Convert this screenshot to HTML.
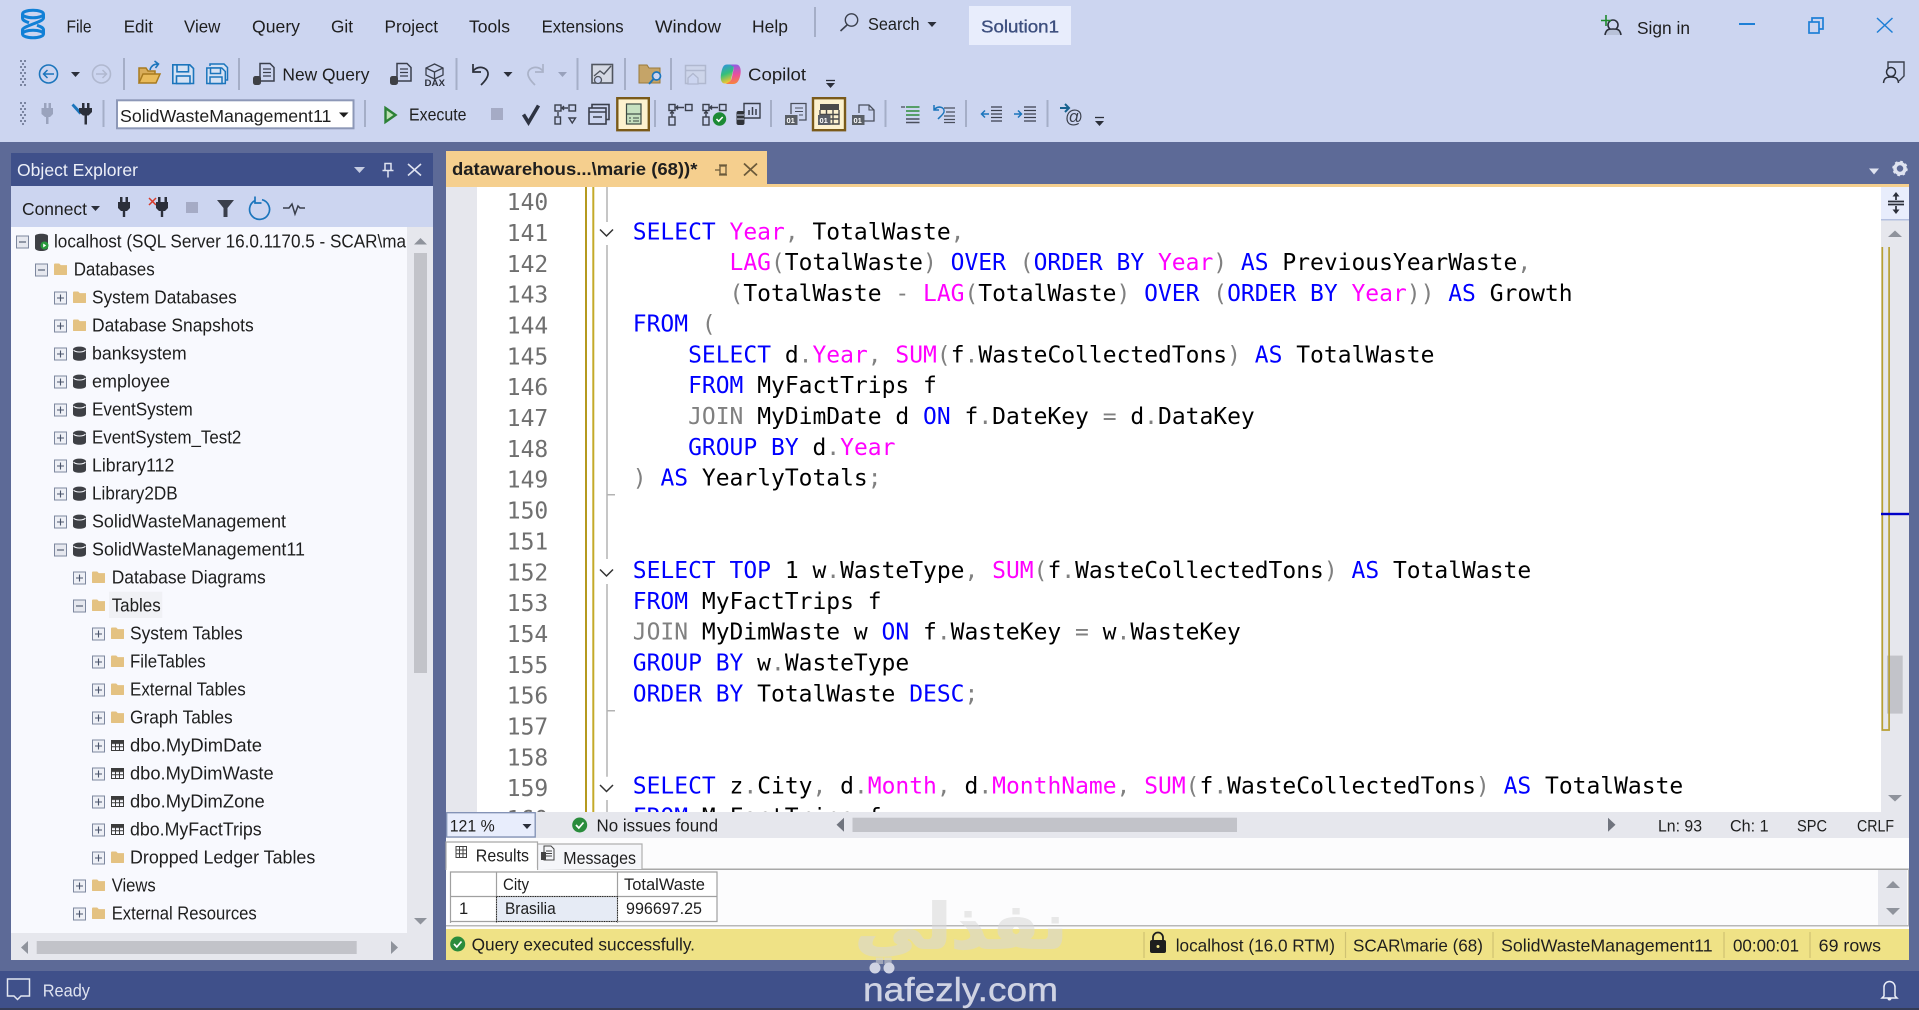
<!DOCTYPE html>
<html lang="en">
<head>
<meta charset="utf-8">
<title>SSMS</title>
<style>
html,body{margin:0;padding:0;width:1919px;height:1010px;overflow:hidden;background:#5d6a97}
svg{display:block}
text{font-family:"Liberation Sans",sans-serif;fill:#1e1e1e;font-size:17.5px}
.t{font-size:18px}
.c{font-family:"DejaVu Sans Mono",monospace;font-size:22.96px;fill:#000;white-space:pre}
.n{font-family:"DejaVu Sans Mono",monospace;font-size:22.96px;fill:#6f6f6f}
.k{fill:#0000ff}.f{fill:#ff00ff}.g{fill:#808080}
.s{font-size:15.5px}
.ic{fill:none;stroke:#3a3f4c;stroke-width:1.5}
.o{font-family:"Liberation Sans",sans-serif;font-size:7.5px;font-weight:bold;fill:#fff}
</style>
</head>
<body>
<svg xmlns="http://www.w3.org/2000/svg" width="1919" height="1010" viewBox="0 0 1919 1010">
<defs>
<clipPath id="treeclip"><rect x="11" y="227" width="395.700" height="706"/></clipPath>
<g id="fo"><path d="M0 1.5a1 1 0 0 1 1-1h4.2l1.6 1.6H13v9.4a.5.5 0 0 1-.5.5H.5a.5.5 0 0 1-.5-.5z" fill="#e4c282"/></g>
<g id="db"><path d="M0 3C0-.8 13-.8 13 3V11.5C13 15.200 0 15.200 0 11.5z" fill="#3e4045"/><path d="M.6 3.600C2.500 6.200 10.500 6.200 12.400 3.600" fill="none" stroke="#f8f9fe" stroke-width="1"/></g>
<g id="tb"><rect x=".5" y=".5" width="12" height="10" fill="#f8f9fe" stroke="#3c3c3c"/><path d="M.5 3.600h12M.5 6.800h12M4.500 .5v10M8.500 .5v10" stroke="#3c3c3c" fill="none"/><rect x=".5" y=".5" width="12" height="2.500" fill="#3c3c3c"/></g>
<g id="pl"><rect x=".5" y=".5" width="12" height="12" fill="#eef0f6" stroke="#7d879e"/><path d="M3 6.500h7M6.500 3v7" stroke="#4a556c" stroke-width="1.100"/></g>
<g id="mi"><rect x=".5" y=".5" width="12" height="12" fill="#e6e8ef" stroke="#7d879e"/><path d="M3 6.500h7" stroke="#4a556c" stroke-width="1.100"/></g>
<g id="cv"><path d="M0 0l6.500 6.500L13 0" fill="none" stroke="#333" stroke-width="1.500"/></g>
<linearGradient id="cpa" x1="0" y1="0" x2="0.3" y2="1"><stop offset="0" stop-color="#2f8fe8"/><stop offset=".55" stop-color="#35c07a"/><stop offset="1" stop-color="#f2c530"/></linearGradient>
<linearGradient id="cpb" x1="0.4" y1="0" x2="0.5" y2="1"><stop offset="0" stop-color="#8a5ce6"/><stop offset=".55" stop-color="#ec4f9c"/><stop offset="1" stop-color="#f7863a"/></linearGradient>
</defs>

<!-- chrome -->
<rect width="1919" height="142" fill="#ccd5f0"/>
<rect y="142" width="1919" height="829" fill="#5d6a97"/>
<rect y="971" width="1919" height="37" fill="#3f508a"/>
<rect y="1008" width="1919" height="2" fill="#343c57"/>

<!-- logo -->
<g fill="none" stroke="#1180d6" stroke-width="3">
<ellipse cx="33" cy="14" rx="10.500" ry="3.800"/>
<ellipse cx="33" cy="34" rx="10.500" ry="3.800"/>
<path d="M22.500 14v4c0 2.500 3 3.500 6.500 4.700M43.500 14v4c0 4-21 8-21 12v4M43.500 34v-4c0-2.500-3-3.500-6.500-4.700"/>
</g>

<!-- menu -->
<text x="66.500" y="32.700" textLength="25" lengthAdjust="spacingAndGlyphs">File</text>
<text x="123.700" y="32.700" textLength="29.300" lengthAdjust="spacingAndGlyphs">Edit</text>
<text x="184" y="32.700" textLength="36.400" lengthAdjust="spacingAndGlyphs">View</text>
<text x="252" y="32.700" textLength="48" lengthAdjust="spacingAndGlyphs">Query</text>
<text x="331" y="32.700" textLength="22" lengthAdjust="spacingAndGlyphs">Git</text>
<text x="384.500" y="32.700" textLength="53.500" lengthAdjust="spacingAndGlyphs">Project</text>
<text x="469" y="32.700" textLength="41" lengthAdjust="spacingAndGlyphs">Tools</text>
<text x="541.600" y="32.700" textLength="82" lengthAdjust="spacingAndGlyphs">Extensions</text>
<text x="655" y="32.700" textLength="66" lengthAdjust="spacingAndGlyphs">Window</text>
<text x="752" y="32.700" textLength="36" lengthAdjust="spacingAndGlyphs">Help</text>
<rect x="814" y="7" width="2" height="30" fill="#a5aec7"/>
<circle cx="851.500" cy="20" r="6.200" fill="none" stroke="#3a3f4c" stroke-width="1.400"/><path d="M847 25l-6.500 6" stroke="#3a3f4c" stroke-width="1.600"/>
<text x="868" y="30" textLength="51.600" lengthAdjust="spacingAndGlyphs">Search</text>
<path d="M927.500 22h9l-4.500 5z" fill="#2b2f3a"/>
<rect x="969" y="6" width="102" height="39" fill="#e8edfc"/>
<text x="981" y="32.700" textLength="78" lengthAdjust="spacingAndGlyphs" style="fill:#3d4f7e;stroke:#3d4f7e;stroke-width:.35;font-size:17.500px">Solution1</text>

<!-- sign in / window -->
<circle cx="1613" cy="25" r="5" fill="none" stroke="#2b2f3a" stroke-width="1.600"/>
<path d="M1605 35c1-6 4-6 8-6s7 0 8 6" fill="#b8c1d8" stroke="#2b2f3a" stroke-width="1.600"/>
<path d="M1606 15v11M1601 20.500h10" stroke="#1e8a2c" stroke-width="1.600"/>
<text x="1637" y="34" textLength="53" lengthAdjust="spacingAndGlyphs">Sign in</text>
<path d="M1739 24h16" stroke="#1e7fd6" stroke-width="2"/>
<g fill="none" stroke="#1e7fd6" stroke-width="1.700"><rect x="1809" y="22" width="10" height="11"/><path d="M1812 22v-4h11v11h-4"/></g>
<path d="M1877 18l15.500 14.500M1892.500 18l-15.500 14.500" stroke="#1e7fd6" stroke-width="1.500"/>
<path d="M1888 68v-6h16v14l-5 5" fill="none" stroke="#3a3f4c" stroke-width="1.400"/><circle cx="1891" cy="72" r="4.500" fill="#ccd5f0" stroke="#2b2f3a" stroke-width="1.500"/><path d="M1883.500 83c.5-5 3-6 7.500-6s7 1 7.500 6" fill="#ccd5f0" stroke="#2b2f3a" stroke-width="1.500"/>

<!-- toolbar 1 -->
<g fill="#7a84a0"><rect x="20" y="60" width="2" height="2"/><rect x="24" y="60" width="2" height="2"/><rect x="22" y="63" width="2" height="2"/><rect x="20" y="66" width="2" height="2"/><rect x="24" y="66" width="2" height="2"/><rect x="22" y="69" width="2" height="2"/><rect x="20" y="72" width="2" height="2"/><rect x="24" y="72" width="2" height="2"/><rect x="22" y="75" width="2" height="2"/><rect x="20" y="78" width="2" height="2"/><rect x="24" y="78" width="2" height="2"/><rect x="22" y="81" width="2" height="2"/><rect x="20" y="84" width="2" height="2"/><rect x="24" y="84" width="2" height="2"/>
<rect x="20" y="102" width="2" height="2"/><rect x="24" y="102" width="2" height="2"/><rect x="22" y="105" width="2" height="2"/><rect x="20" y="108" width="2" height="2"/><rect x="24" y="108" width="2" height="2"/><rect x="22" y="111" width="2" height="2"/><rect x="20" y="114" width="2" height="2"/><rect x="24" y="114" width="2" height="2"/><rect x="22" y="117" width="2" height="2"/><rect x="20" y="120" width="2" height="2"/><rect x="24" y="120" width="2" height="2"/><rect x="22" y="123" width="2" height="2"/></g>
<circle cx="48.500" cy="74" r="9" fill="none" stroke="#1b75bc" stroke-width="1.600"/><path d="M54 74H43.500M47.500 70l-4 4 4 4" fill="none" stroke="#1b75bc" stroke-width="1.500"/>
<path d="M71 72h9l-4.500 5z" fill="#2b2f3a"/>
<circle cx="101.500" cy="74" r="9" fill="none" stroke="#b0b8cf" stroke-width="1.600"/><path d="M96 74h10.500M102.500 70l4 4-4 4" fill="none" stroke="#b0b8cf" stroke-width="1.500"/>
<rect x="123" y="58" width="2" height="32" fill="#a5aec7"/>
<path d="M139 83V68h7l2 3h7v3" fill="#d9ad5a" stroke="#a87b1f" stroke-width="1.500"/><path d="M139 83l4-9h17l-4 9z" fill="#e9bb5a" stroke="#a87b1f" stroke-width="1.500"/><path d="M150 70c1-4 4-6 8-6M154.500 61l4 3-3 4" fill="none" stroke="#1b75bc" stroke-width="1.600"/>
<g fill="#d5e2f4" stroke="#1b75bc" stroke-width="1.600"><path d="M172.800 64.800h17l3.700 3.700v15h-20.700z"/><rect x="177" y="64.800" width="11.500" height="7"/><rect x="176.500" y="76" width="13.500" height="7.500"/></g>
<g fill="#d5e2f4" stroke="#1b75bc" stroke-width="1.500"><path d="M210 66v-2h14l3.500 3.500V80h-2"/><path d="M206.800 68h15l3.500 3.500v12h-18.500z"/><rect x="210.500" y="68" width="10" height="5.500"/><rect x="210" y="77" width="12" height="6.500"/></g>
<rect x="238" y="58" width="2" height="32" fill="#a5aec7"/>
<g><path d="M260 80V63.500h10l4 4V81h-14z" fill="#ccd5f0" stroke="#3a3f4c" stroke-width="1.500"/><path d="M263 69h8M263 72.500h8M263 76h8" stroke="#3a3f4c" stroke-width="1.200"/><rect x="253" y="76" width="8" height="9" rx="2.500" fill="#3e4045"/></g>
<text x="282.400" y="80.700" textLength="87" lengthAdjust="spacingAndGlyphs">New Query</text>
<g transform="translate(137,0)"><path d="M260 80V63.500h10l4 4V81h-14z" fill="#ccd5f0" stroke="#3a3f4c" stroke-width="1.500"/><path d="M263 69h8M263 72.500h8M263 76h8" stroke="#3a3f4c" stroke-width="1.200"/><rect x="253" y="76" width="8" height="9" rx="2.500" fill="#3e4045"/></g>
<path d="M434.500 64l8.500 4v7l-8.500 4-8.500-4v-7zM426 68l8.500 4 8.500-4M434.500 72v7" fill="none" stroke="#3a3f4c" stroke-width="1.300"/>
<text x="424.500" y="86" textLength="20.500" lengthAdjust="spacingAndGlyphs" style="font-size:9px;font-weight:bold;fill:#2b2f3a">DAX</text>
<rect x="455.500" y="58" width="2" height="32" fill="#a5aec7"/>
<path d="M473 64v8h8M473 71c5-6 14-4 15 2 .5 4-3 8-7 12" fill="none" stroke="#2b2f3a" stroke-width="1.700"/>
<path d="M503.500 72h9l-4.500 5z" fill="#2b2f3a"/>
<path d="M543 64v8h-8M543 71c-5-6-14-4-15 2-.5 4 3 8 7 12" fill="none" stroke="#aab2c8" stroke-width="1.700"/>
<path d="M558 72h9l-4.500 5z" fill="#98a1bb"/>
<rect x="576.500" y="58" width="2" height="32" fill="#a5aec7"/>
<rect x="592" y="64.500" width="20.500" height="18.500" fill="#d5d9e4" stroke="#50555f" stroke-width="1.600"/><path d="M594 76l6-5 4 3 7-8" fill="none" stroke="#50555f" stroke-width="1.400"/><circle cx="598" cy="80" r="3.500" fill="#ccd5f0" stroke="#50555f" stroke-width="1.300"/>
<rect x="624" y="58" width="2" height="32" fill="#a5aec7"/>
<path d="M639 65h8l2 3h11v15h-21z" fill="#c5a468" stroke="#9a7a3a"/>
<circle cx="656.500" cy="76" r="4" fill="#ccd5f0" stroke="#1b75bc" stroke-width="1.700"/><path d="M653.500 79l-4.500 5" stroke="#1b75bc" stroke-width="2"/>
<rect x="670" y="58" width="2" height="32" fill="#a5aec7"/>
<rect x="685.500" y="65.500" width="20" height="18" fill="#cdd5ea" stroke="#b0b8cf" stroke-width="1.500"/><path d="M686 70.500h19" stroke="#b0b8cf" stroke-width="1.500"/><path d="M688 78l5-4.500 5 4.500v6h-10z" fill="#ccd5f0" stroke="#b0b8cf" stroke-width="1.300"/>
<path d="M727 64.500c-3.500 0-4.500 3-5.500 7-1.200 5-1.500 12 3.500 12h5l4.500-19z" fill="url(#cpa)"/>
<path d="M730 64.500h6c5 0 5.500 7 4 12-1.200 4.500-3 7.500-7 7.500h-7l3-2c2-1 2.500-3 3-5l2-10z" fill="url(#cpb)"/>
<text x="748" y="80.700" textLength="58" lengthAdjust="spacingAndGlyphs">Copilot</text>
<path d="M826 80.500h9" stroke="#2b2f3a" stroke-width="1.300"/><path d="M826 83h9l-4.500 5z" fill="#2b2f3a"/>

<!-- toolbar 2 -->
<path d="M44 103h2.500v5H44zM48.500 103H51v5h-2.500zM41.500 108h11.500v6l-3 3h-1.500v7h-2.500v-7H45l-3.500-3z" fill="#9aa3bd"/>
<path d="M71.500 105.500l2-2 8.500 9-2.500 2z" fill="#1b75bc"/>
<path d="M82 103h2.500v5H82zM87 103h2.500v5H87zM79 108h13v4l-3.500 3.500H87v9h-2.500v-9H83L79 112z" fill="#2b2f3a"/>
<rect x="102.500" y="100" width="2" height="27" fill="#a5aec7"/>
<rect x="117" y="100.300" width="236.500" height="28" fill="#fff" stroke="#8d98b7" stroke-width="2"/>
<text x="120" y="122" textLength="211.400" lengthAdjust="spacingAndGlyphs">SolidWasteManagement11</text>
<path d="M339 112.500h9.500l-4.750 5z" fill="#1e1e1e"/>
<rect x="364" y="100" width="2" height="27" fill="#a5aec7"/>
<path d="M385.500 108l10 7-10 7z" fill="#bde0b4" stroke="#2c8136" stroke-width="2.400"/>
<text x="409" y="120.700" textLength="57.500" lengthAdjust="spacingAndGlyphs">Execute</text>
<rect x="491" y="108" width="12" height="12" fill="#a5abc5"/>
<path d="M523.500 114.500l5 8 10-17" fill="none" stroke="#2d3342" stroke-width="3.600"/>
<g fill="none" stroke="#3a3f4c" stroke-width="1.400"><rect x="555" y="105" width="6" height="6"/><rect x="569" y="105" width="6.500" height="6"/><path d="M562 108h6M564 106l-2 2 2 2M558 112v4"/><rect x="555" y="117" width="5.500" height="7"/><path d="M569 118h6.500l-3.250 5z"/></g>
<g fill="none" stroke="#3a3f4c" stroke-width="1.600"><rect x="592" y="104.500" width="17" height="15"/><rect x="589" y="108" width="17" height="16" fill="#ccd5f0"/><path d="M589 112h17M593 117h9"/></g>
<rect x="617.300" y="98.200" width="31.500" height="32" fill="#fdf2cf" stroke="#7a5a1a" stroke-width="2.400"/>
<rect x="626.500" y="104" width="14.500" height="20" fill="#c6e0c0" stroke="#3c4a44" stroke-width="1.200"/><path d="M626.500 114h14.500" stroke="#3c4a44" stroke-width="1.200"/><path d="M629 118h2M633 118h6M629 121h2M633 121h6" stroke="#3c4a44" stroke-width="1.100"/>
<rect x="654" y="100" width="2" height="27" fill="#a5aec7"/>
<g fill="none" stroke="#3a3f4c" stroke-width="1.400"><rect x="669" y="104.500" width="6" height="6"/><rect x="685.500" y="104.500" width="6.500" height="6"/><path d="M676 107.500h8M678 105.500l-2 2 2 2M672 111.500v5M670 113.500l2-2 2 2"/><rect x="669" y="117" width="6" height="8"/></g>
<g fill="none" stroke="#3a3f4c" stroke-width="1.400"><rect x="703" y="104.500" width="6" height="6"/><rect x="719.500" y="104.500" width="6.500" height="6"/><path d="M710 107.500h8M712 105.500l-2 2 2 2M706 111.500v5M704 113.500l2-2 2 2"/><rect x="703" y="117" width="6" height="8"/></g>
<circle cx="719.500" cy="119" r="6.700" fill="#1c8a35"/><path d="M716.500 119l2.200 2.300 4-4.300" fill="none" stroke="#fff" stroke-width="1.500"/>
<path d="M744 113v-9.500h16V118h-16" fill="none" stroke="#3a3f4c" stroke-width="1.400"/><path d="M749 115v-5M752.500 115v-8M756 115v-6" stroke="#3a3f4c" stroke-width="1.500"/><rect x="736.500" y="111" width="8" height="14" rx="2" fill="#2f3238"/><path d="M737 115h7M737 119h7" stroke="#ccd5f0"/>
<rect x="770" y="100" width="2" height="27" fill="#a5aec7"/>
<path d="M791 114v-10.500h15V120h-7" fill="none" stroke="#4a4f5c" stroke-width="1.300"/><path d="M795 108h8M795 111.500h8M799 115h4" stroke="#4a4f5c" stroke-width="1.100"/><rect x="785" y="115" width="12.500" height="10" fill="#5a5f66"/><text x="786.500" y="123" class="o">01</text>
<rect x="813" y="98.200" width="32" height="32" fill="#fdf2cf" stroke="#7a5a1a" stroke-width="2.400"/>
<path d="M820 104h19v6h-19z" fill="#4a4a4a"/><path d="M820 110v9M826.500 110v4M833 110v14M839 110v14H830M820 114.500h19M830 119h9" fill="none" stroke="#4a4a4a" stroke-width="1.400"/><rect x="818" y="115" width="12.500" height="10" fill="#5a5f66"/><text x="819.500" y="123" class="o">01</text>
<path d="M859 113v-8h10l5 5v11h-10" fill="none" stroke="#4a4f5c" stroke-width="1.300"/><path d="M869 105v5h5" fill="none" stroke="#4a4f5c" stroke-width="1.100"/><rect x="852" y="115" width="12.500" height="10" fill="#5a5f66"/><text x="853.500" y="123" class="o">01</text>
<rect x="884.500" y="100" width="2" height="27" fill="#a5aec7"/>
<path d="M901 107h4" stroke="#4a4f5c" stroke-width="1.300"/><path d="M906 107h13.500M906 111h13.500M906 115h13.500" stroke="#2f8b3a" stroke-width="1.400"/><path d="M906 119h13.500M906 122.500h13.500" stroke="#4a4f5c" stroke-width="1.400"/>
<path d="M934 105v5h5M934 110c4-5 11-3 10 2-.5 2-3 4-6 7" fill="none" stroke="#1b75bc" stroke-width="1.500"/><path d="M944 108h11M946 112h9M944 116h11M944 119.500h11M944 122.500h11" stroke="#4a4f5c" stroke-width="1.300"/>
<rect x="965" y="100" width="2" height="27" fill="#a5aec7"/>
<path d="M989 114h-7M985 110.500l-3.500 3.500 3.500 3.500" fill="none" stroke="#1b75bc" stroke-width="1.500"/><path d="M991 107h11M991 110.500h11M991 114h11M991 117.500h11M991 121h11" stroke="#3a3f4c" stroke-width="1.300"/>
<path d="M1014 114h7M1018 110.500l3.500 3.500-3.500 3.500" fill="none" stroke="#1b75bc" stroke-width="1.500"/><path d="M1024 107h12M1024 110.500h12M1024 114h12M1024 117.500h12M1024 121h12" stroke="#3a3f4c" stroke-width="1.300"/>
<rect x="1046.500" y="100" width="2" height="27" fill="#a5aec7"/>
<path d="M1060 108h9M1065 104l4 4-4 4" fill="none" stroke="#15618f" stroke-width="2"/>
<text x="1065" y="123" textLength="18" lengthAdjust="spacingAndGlyphs" style="font-size:18px;fill:#3a3f4c">@</text>
<path d="M1095 117.500h9" stroke="#2b2f3a" stroke-width="1.300"/><path d="M1095 121h9l-4.500 5z" fill="#2b2f3a"/>

<!-- Object Explorer -->
<rect x="11" y="153" width="422" height="33" fill="#3f508a"/>
<text x="17" y="176" textLength="121" lengthAdjust="spacingAndGlyphs" style="fill:#eceff8">Object Explorer</text>
<path d="M354 167h11l-5.500 6z" fill="#c5cce2"/>
<path d="M385 163.500h6v7h-6zM382.500 170.500h11M388 170.500v7" fill="#3f508a" stroke="#dfe3f0" stroke-width="1.500"/>
<path d="M408 164l13 11.500M421 164l-13 11.500" stroke="#dfe3f0" stroke-width="1.600"/>
<rect x="11" y="186" width="422" height="41" fill="#ccd5f0"/>
<text x="22" y="215" textLength="65" lengthAdjust="spacingAndGlyphs">Connect</text>
<path d="M91 206h9l-4.500 5z" fill="#2b2f3a"/>
<path d="M120 197h2.500v5H120zM125.500 197h2.500v5h-2.500zM118 202h12v6l-3 3h-1.800v6h-2.400v-6H121l-3-3z" fill="#2b2f3a"/>
<path d="M149 198l7 7M156 198l-7 7" stroke="#d83b2b" stroke-width="1.500"/>
<path d="M158 197h2.500v5H158zM164.500 197h2.500v5h-2.500zM156 202h12v6l-3 3h-1.800v6h-2.400v-6H159l-3-3z" fill="#2b2f3a"/>
<rect x="186" y="202" width="12" height="11" fill="#a5abc5"/>
<path d="M217 200h17l-6.500 8v5h-4v-5zM223.500 213h4v4h-4z" fill="#3a3f4c"/>
<path d="M255 200.500a10 10 0 1 0 7-.8M255 196.500v6.500h6.500" fill="none" stroke="#1b75bc" stroke-width="1.700"/>
<path d="M283 208h6l3-4 3 10 3-8 2 2h5" fill="none" stroke="#3a3f4c" stroke-width="1.500"/>

<rect x="11" y="227" width="396" height="706" fill="#f8f9fe"/>
<rect x="407" y="227" width="26" height="733" fill="#e6e7ed"/>
<rect x="11" y="933" width="422" height="27" fill="#e6e7ed"/>
<rect x="109" y="591.700" width="53.300" height="26.300" fill="#f0f1f5"/>

<!-- tree expanders + icons -->
<use href="#mi" x="16" y="235.500"/>
<path d="M35 236C35 233 48 233 48 236V248C48 252 35 252 35 248z" fill="#3e4045"/><circle cx="44.500" cy="245.500" r="4" fill="#2a9a3c"/><path d="M43.200 243.500l3 2-3 2z" fill="#fff"/>
<use href="#mi" x="35" y="263.500"/><use href="#fo" x="54" y="263"/>
<use href="#pl" x="54" y="291.500"/><use href="#fo" x="73" y="291"/>
<use href="#pl" x="54" y="319.500"/><use href="#fo" x="73" y="319"/>
<use href="#pl" x="54" y="347.500"/><use href="#db" x="73" y="346.500"/>
<use href="#pl" x="54" y="375.500"/><use href="#db" x="73" y="374.500"/>
<use href="#pl" x="54" y="403.500"/><use href="#db" x="73" y="402.500"/>
<use href="#pl" x="54" y="431.500"/><use href="#db" x="73" y="430.500"/>
<use href="#pl" x="54" y="459.500"/><use href="#db" x="73" y="458.500"/>
<use href="#pl" x="54" y="487.500"/><use href="#db" x="73" y="486.500"/>
<use href="#pl" x="54" y="515.500"/><use href="#db" x="73" y="514.500"/>
<use href="#mi" x="54" y="543.500"/><use href="#db" x="73" y="542.500"/>
<use href="#pl" x="73" y="571.500"/><use href="#fo" x="92" y="571"/>
<use href="#mi" x="73" y="599.500"/><use href="#fo" x="92" y="599"/>
<use href="#pl" x="92" y="627.500"/><use href="#fo" x="111" y="627"/>
<use href="#pl" x="92" y="655.500"/><use href="#fo" x="111" y="655"/>
<use href="#pl" x="92" y="683.500"/><use href="#fo" x="111" y="683"/>
<use href="#pl" x="92" y="711.500"/><use href="#fo" x="111" y="711"/>
<use href="#pl" x="92" y="739.500"/><use href="#tb" x="111" y="740"/>
<use href="#pl" x="92" y="767.500"/><use href="#tb" x="111" y="768"/>
<use href="#pl" x="92" y="795.500"/><use href="#tb" x="111" y="796"/>
<use href="#pl" x="92" y="823.500"/><use href="#tb" x="111" y="824"/>
<use href="#pl" x="92" y="851.500"/><use href="#fo" x="111" y="851"/>
<use href="#pl" x="73" y="879.500"/><use href="#fo" x="92" y="879"/>
<use href="#pl" x="73" y="907.500"/><use href="#fo" x="92" y="907"/>

<!-- tree text -->
<text class="t" x="54" y="247.700" textLength="412" lengthAdjust="spacingAndGlyphs" clip-path="url(#treeclip)">localhost (SQL Server 16.0.1170.5 - SCAR\marie (68))</text>
<text class="t" x="73.700" y="275.700" textLength="81" lengthAdjust="spacingAndGlyphs">Databases</text>
<text class="t" x="92" y="303.700" textLength="144.700" lengthAdjust="spacingAndGlyphs">System Databases</text>
<text class="t" x="92" y="331.700" textLength="161.700" lengthAdjust="spacingAndGlyphs">Database Snapshots</text>
<text class="t" x="92" y="359.700" textLength="94.700" lengthAdjust="spacingAndGlyphs">banksystem</text>
<text class="t" x="92" y="387.700" textLength="78" lengthAdjust="spacingAndGlyphs">employee</text>
<text class="t" x="92" y="415.700" textLength="100.700" lengthAdjust="spacingAndGlyphs">EventSystem</text>
<text class="t" x="92" y="443.700" textLength="149.300" lengthAdjust="spacingAndGlyphs">EventSystem_Test2</text>
<text class="t" x="92" y="471.700" textLength="82.300" lengthAdjust="spacingAndGlyphs">Library112</text>
<text class="t" x="92" y="499.700" textLength="85.700" lengthAdjust="spacingAndGlyphs">Library2DB</text>
<text class="t" x="92" y="527.700" textLength="194" lengthAdjust="spacingAndGlyphs">SolidWasteManagement</text>
<text class="t" x="92" y="555.700" textLength="213" lengthAdjust="spacingAndGlyphs">SolidWasteManagement11</text>
<text class="t" x="111.700" y="583.700" textLength="154" lengthAdjust="spacingAndGlyphs">Database Diagrams</text>
<text class="t" x="111.700" y="611.700" textLength="49" lengthAdjust="spacingAndGlyphs">Tables</text>
<text class="t" x="130" y="639.700" textLength="112.700" lengthAdjust="spacingAndGlyphs">System Tables</text>
<text class="t" x="130" y="667.700" textLength="75.700" lengthAdjust="spacingAndGlyphs">FileTables</text>
<text class="t" x="130" y="695.700" textLength="115.700" lengthAdjust="spacingAndGlyphs">External Tables</text>
<text class="t" x="130" y="723.700" textLength="102.700" lengthAdjust="spacingAndGlyphs">Graph Tables</text>
<text class="t" x="130" y="751.700" textLength="132" lengthAdjust="spacingAndGlyphs">dbo.MyDimDate</text>
<text class="t" x="130" y="779.700" textLength="143.700" lengthAdjust="spacingAndGlyphs">dbo.MyDimWaste</text>
<text class="t" x="130" y="807.700" textLength="134.700" lengthAdjust="spacingAndGlyphs">dbo.MyDimZone</text>
<text class="t" x="130" y="835.700" textLength="131.700" lengthAdjust="spacingAndGlyphs">dbo.MyFactTrips</text>
<text class="t" x="130" y="863.700" textLength="185.300" lengthAdjust="spacingAndGlyphs">Dropped Ledger Tables</text>
<text class="t" x="111.700" y="891.700" textLength="44" lengthAdjust="spacingAndGlyphs">Views</text>
<text class="t" x="111.700" y="919.700" textLength="145" lengthAdjust="spacingAndGlyphs">External Resources</text>

<!-- tree scrollbars -->
<path d="M414 244.500h13l-6.500-6.500z" fill="#8f939c"/>
<rect x="414" y="253" width="13" height="420" fill="#c2c3c9"/>
<path d="M414 918h13l-6.500 6.500z" fill="#8f939c"/>
<path d="M28 941v13l-7-6.500z" fill="#8f939c"/>
<rect x="36.700" y="941" width="320" height="13" fill="#c2c3c9"/>
<path d="M391 941v13l7-6.500z" fill="#8f939c"/>

<!-- document tab -->
<rect x="446" y="184" width="1463" height="3" fill="#f5cf8e"/>
<rect x="446" y="151" width="321" height="36" fill="#f5cf8e"/>
<text x="452" y="175" textLength="245.400" lengthAdjust="spacingAndGlyphs" style="font-weight:bold">datawarehous...\marie (68))*</text>
<path d="M715 170h5M720 165v10M720 166h6v8h-6M719 165h8M719 175h8" fill="none" stroke="#6b5a3a" stroke-width="1.300"/>
<path d="M744 163.500l13 12M757 163.500l-13 12" stroke="#6b5a3a" stroke-width="1.800"/>
<path d="M1869 168.500h10l-5 6z" fill="#dfe3f0"/>
<circle cx="1900" cy="168.500" r="5" fill="none" stroke="#dfe3f0" stroke-width="3.500"/><circle cx="1900" cy="168.500" r="6.500" fill="none" stroke="#dfe3f0" stroke-width="2.500" stroke-dasharray="2.500 2.600"/>

<!-- editor -->
<rect x="446" y="187" width="1463" height="625" fill="#fff"/>
<rect x="446" y="187" width="31" height="625" fill="#e6e7ed"/>
<rect x="585" y="187" width="2" height="625" fill="#b59a1f"/>
<rect x="592.300" y="187" width="2" height="625" fill="#c4aa2a"/>
<path d="M607 187v35M607 245v314M607 584v192.700M607 800v12M607 494.700h8M607 710.700h8" stroke="#b3b3b3" stroke-width="1.500" fill="none"/>
<use href="#cv" x="600" y="229.500"/><use href="#cv" x="600" y="569.500"/><use href="#cv" x="600" y="785"/>

<text class="n" x="506.800" y="210.200">140</text><text class="n" x="506.800" y="241">141</text><text class="n" x="506.800" y="271.800">142</text><text class="n" x="506.800" y="302.600">143</text><text class="n" x="506.800" y="333.500">144</text><text class="n" x="506.800" y="364.300">145</text><text class="n" x="506.800" y="395.200">146</text><text class="n" x="506.800" y="426">147</text><text class="n" x="506.800" y="456.900">148</text><text class="n" x="506.800" y="487.700">149</text><text class="n" x="506.800" y="518.600">150</text><text class="n" x="506.800" y="549.400">151</text><text class="n" x="506.800" y="580.300">152</text><text class="n" x="506.800" y="611.100">153</text><text class="n" x="506.800" y="642">154</text><text class="n" x="506.800" y="672.800">155</text><text class="n" x="506.800" y="703.700">156</text><text class="n" x="506.800" y="734.500">157</text><text class="n" x="506.800" y="765.400">158</text><text class="n" x="506.800" y="796.200">159</text><text class="n" x="506.800" y="827">160</text>

<text class="c" x="632.800" y="239.300"><tspan class="k">SELECT</tspan> <tspan class="f">Year</tspan><tspan class="g">,</tspan> TotalWaste<tspan class="g">,</tspan></text>
<text class="c" x="729.500" y="270.100"><tspan class="f">LAG</tspan><tspan class="g">(</tspan>TotalWaste<tspan class="g">)</tspan> <tspan class="k">OVER</tspan> <tspan class="g">(</tspan><tspan class="k">ORDER BY</tspan> <tspan class="f">Year</tspan><tspan class="g">)</tspan> <tspan class="k">AS</tspan> PreviousYearWaste<tspan class="g">,</tspan></text>
<text class="c" x="729.500" y="300.900"><tspan class="g">(</tspan>TotalWaste <tspan class="g">-</tspan> <tspan class="f">LAG</tspan><tspan class="g">(</tspan>TotalWaste<tspan class="g">)</tspan> <tspan class="k">OVER</tspan> <tspan class="g">(</tspan><tspan class="k">ORDER BY</tspan> <tspan class="f">Year</tspan><tspan class="g">))</tspan> <tspan class="k">AS</tspan> Growth</text>
<text class="c" x="632.800" y="331.700"><tspan class="k">FROM</tspan> <tspan class="g">(</tspan></text>
<text class="c" x="688.100" y="362.300"><tspan class="k">SELECT</tspan> d<tspan class="g">.</tspan><tspan class="f">Year</tspan><tspan class="g">,</tspan> <tspan class="f">SUM</tspan><tspan class="g">(</tspan>f<tspan class="g">.</tspan>WasteCollectedTons<tspan class="g">)</tspan> <tspan class="k">AS</tspan> TotalWaste</text>
<text class="c" x="688.100" y="393.100"><tspan class="k">FROM</tspan> MyFactTrips f</text>
<text class="c" x="688.100" y="424.100"><tspan class="g">JOIN</tspan> MyDimDate d <tspan class="k">ON</tspan> f<tspan class="g">.</tspan>DateKey <tspan class="g">=</tspan> d<tspan class="g">.</tspan>DataKey</text>
<text class="c" x="688.100" y="454.900"><tspan class="k">GROUP BY</tspan> d<tspan class="g">.</tspan><tspan class="f">Year</tspan></text>
<text class="c" x="632.800" y="485.700"><tspan class="g">)</tspan> <tspan class="k">AS</tspan> YearlyTotals<tspan class="g">;</tspan></text>
<text class="c" x="632.800" y="578.100"><tspan class="k">SELECT TOP</tspan> 1 w<tspan class="g">.</tspan>WasteType<tspan class="g">,</tspan> <tspan class="f">SUM</tspan><tspan class="g">(</tspan>f<tspan class="g">.</tspan>WasteCollectedTons<tspan class="g">)</tspan> <tspan class="k">AS</tspan> TotalWaste</text>
<text class="c" x="632.800" y="608.900"><tspan class="k">FROM</tspan> MyFactTrips f</text>
<text class="c" x="632.800" y="639.700"><tspan class="g">JOIN</tspan> MyDimWaste w <tspan class="k">ON</tspan> f<tspan class="g">.</tspan>WasteKey <tspan class="g">=</tspan> w<tspan class="g">.</tspan>WasteKey</text>
<text class="c" x="632.800" y="670.500"><tspan class="k">GROUP BY</tspan> w<tspan class="g">.</tspan>WasteType</text>
<text class="c" x="632.800" y="701.300"><tspan class="k">ORDER BY</tspan> TotalWaste <tspan class="k">DESC</tspan><tspan class="g">;</tspan></text>
<text class="c" x="632.800" y="793.700"><tspan class="k">SELECT</tspan> z<tspan class="g">.</tspan>City<tspan class="g">,</tspan> d<tspan class="g">.</tspan><tspan class="f">Month</tspan><tspan class="g">,</tspan> d<tspan class="g">.</tspan><tspan class="f">MonthName</tspan><tspan class="g">,</tspan> <tspan class="f">SUM</tspan><tspan class="g">(</tspan>f<tspan class="g">.</tspan>WasteCollectedTons<tspan class="g">)</tspan> <tspan class="k">AS</tspan> TotalWaste</text>
<text class="c" x="632.800" y="824.500"><tspan class="k">FROM</tspan> MyFactTrips f</text>

<!-- editor scrollbar -->
<rect x="1881" y="187" width="28" height="625" fill="#e6e7ed"/>
<rect x="1881" y="187" width="28" height="33" fill="#e8edfc"/><rect x="1881" y="219" width="28" height="1.500" fill="#b4c0e0"/>
<path d="M1888 201.500h16M1888 204.500h16" stroke="#2b2f3a" stroke-width="1.700"/><path d="M1896 194v6M1896 206v6" stroke="#2b2f3a" stroke-width="1.700"/><path d="M1892.500 196.500h7l-3.500-4.500zM1892.500 209.500h7l-3.500 4.500z" fill="#2b2f3a"/>
<path d="M1888 237h14l-7-6.500z" fill="#8f939c"/>
<rect x="1887" y="655.600" width="15.700" height="58" fill="#c2c3c9"/>
<path d="M1882.300 247v483h6.800V247" fill="none" stroke="#b8a032" stroke-width="1.700"/>
<rect x="1881" y="512.800" width="28" height="2.400" fill="#0000c8"/>
<path d="M1888 795h14l-7 6.500z" fill="#8f939c"/>

<!-- editor status -->
<rect x="446" y="812" width="1463" height="26" fill="#e6e7ed"/>
<rect x="446.700" y="812.700" width="88.500" height="24.300" fill="#e8edfc" stroke="#7f8fb3" stroke-width="1.300"/>
<text x="449.700" y="831.700" textLength="45" lengthAdjust="spacingAndGlyphs" class="s" style="font-size:16.500px">121 %</text>
<path d="M522.500 824h9l-4.500 5z" fill="#2b2f3a"/>
<circle cx="579.700" cy="825" r="7.500" fill="#2a8c3c"/><path d="M576 825l2.800 3 4.700-5.500" fill="none" stroke="#fff" stroke-width="1.700"/>
<text x="596.500" y="831.700" textLength="121.500" lengthAdjust="spacingAndGlyphs">No issues found</text>
<path d="M844 817.700v14l-7.500-7z" fill="#70747e"/>
<rect x="852.500" y="817.700" width="384.500" height="14.300" fill="#c2c3c9"/>
<path d="M1608 817.700v14l7.500-7z" fill="#70747e"/>
<text x="1658" y="831.700" textLength="44" lengthAdjust="spacingAndGlyphs" style="font-size:16.500px">Ln: 93</text>
<text x="1730" y="831.700" textLength="38.600" lengthAdjust="spacingAndGlyphs" style="font-size:16.500px">Ch: 1</text>
<text x="1797" y="831.700" textLength="30" lengthAdjust="spacingAndGlyphs" style="font-size:16.500px">SPC</text>
<text x="1857" y="831.700" textLength="37" lengthAdjust="spacingAndGlyphs" style="font-size:16.500px">CRLF</text>

<!-- results panel -->
<rect x="446" y="838" width="1463" height="91" fill="#fcfcfd"/>
<rect x="446" y="868.500" width="1463" height="1.500" fill="#a8a8a8"/>
<rect x="446" y="925" width="1463" height="1.500" fill="#b8b8b8"/>
<rect x="1908" y="869" width="1" height="57" fill="#b8b8b8"/>
<path d="M537.500 870v-26H642v25" fill="#f5f6f9" stroke="#b0b0b0" stroke-width="1.200"/>
<path d="M446 870v-28h91.500v28" fill="#fff" stroke="#a8a8a8" stroke-width="1.200"/>
<rect x="446.600" y="868" width="90.300" height="3" fill="#fff"/>
<g fill="none" stroke="#444" stroke-width="1"><rect x="456" y="846.500" width="10.500" height="11"/><path d="M456 850h10.500M456 853.800h10.500M459.500 846.500v11M463 846.500v11"/></g>
<text x="475.800" y="861.700" textLength="53.200" lengthAdjust="spacingAndGlyphs">Results</text>
<path d="M544 850v-4h7l3 3v11h-10zM546 851h6M546 853.500h6M546 856h6" fill="none" stroke="#444" stroke-width="1"/><rect x="541" y="852" width="5" height="8" fill="#444"/>
<text x="563.300" y="864" textLength="72.700" lengthAdjust="spacingAndGlyphs">Messages</text>
<!-- grid -->
<rect x="451" y="872" width="266" height="51" fill="#fff"/>
<rect x="496.500" y="896.500" width="121" height="25" fill="#e6ebf5"/>
<path d="M450.500 872H717V896.500H450.500zM450.500 896.500V923M450.500 921.500H717V896.500M496.500 872V923M617.500 872V923" fill="none" stroke="#a0a0a0" stroke-width="1.200"/>
<rect x="496.500" y="896.500" width="121" height="25" fill="none" stroke="#222" stroke-width="1" stroke-dasharray="1.200 1.200"/>
<text x="503" y="890" textLength="26" lengthAdjust="spacingAndGlyphs" style="font-size:16.500px">City</text>
<text x="624" y="890" textLength="81" lengthAdjust="spacingAndGlyphs" style="font-size:16.500px">TotalWaste</text>
<text x="459" y="914" style="font-size:16.500px">1</text>
<text x="505" y="914" textLength="50.700" lengthAdjust="spacingAndGlyphs" style="font-size:16.500px">Brasilia</text>
<text x="626" y="914" textLength="76" lengthAdjust="spacingAndGlyphs" style="font-size:16.500px">996697.25</text>
<rect x="1878" y="870" width="29" height="55" fill="#e6e7ed"/>
<path d="M1886 888h14l-7-7z" fill="#8f939c"/><path d="M1886 908h14l-7 7z" fill="#8f939c"/>

<!-- yellow bar -->
<rect x="446" y="929" width="1463" height="31" fill="#efe286"/>
<circle cx="457.700" cy="944" r="7.500" fill="#2a8c3c"/><path d="M454 944l2.800 3 4.700-5.500" fill="none" stroke="#fff" stroke-width="1.700"/>
<text x="471.600" y="950.700" textLength="223.400" lengthAdjust="spacingAndGlyphs">Query executed successfully.</text>
<path d="M1144 932v26M1345.500 932v26M1493 932v26M1724 932v26M1810 932v26" stroke="#cfc273" stroke-width="1.200"/>
<rect x="1150" y="940" width="16" height="13" rx="2" fill="#1e1e1e"/><path d="M1153 940v-2.500a5 5 0 0 1 10 0V940" fill="none" stroke="#1e1e1e" stroke-width="1.800"/><circle cx="1158" cy="946.500" r="1.500" fill="#efe286"/>
<text x="1175.700" y="951.700" textLength="159.300" lengthAdjust="spacingAndGlyphs">localhost (16.0 RTM)</text>
<text x="1353" y="951.700" textLength="130" lengthAdjust="spacingAndGlyphs">SCAR\marie (68)</text>
<text x="1501" y="951.700" textLength="211.700" lengthAdjust="spacingAndGlyphs">SolidWasteManagement11</text>
<text x="1733" y="951.700" textLength="66" lengthAdjust="spacingAndGlyphs">00:00:01</text>
<text x="1818.700" y="951.700" textLength="62.300" lengthAdjust="spacingAndGlyphs">69 rows</text>

<!-- status bar -->
<path d="M7.500 979h22v17H21l-3.500 3.500L14 996H7.500z" fill="none" stroke="#e4e7f2" stroke-width="1.500"/>
<text x="42.700" y="996.700" textLength="47.300" lengthAdjust="spacingAndGlyphs" style="fill:#dfe3f0">Ready</text>
<path d="M1884 996v-9a5.500 5.500 0 0 1 11 0v9l2 2h-15z" fill="none" stroke="#eceff8" stroke-width="1.500"/><path d="M1888 998.500a1.500 1.500 0 0 0 3 0" fill="#eceff8" stroke="#eceff8"/>

<!-- watermark -->
<text x="855" y="948" textLength="212" lengthAdjust="spacingAndGlyphs" style="font-family:'DejaVu Sans',sans-serif;font-weight:bold;font-size:62px;fill:#d8d8d8;stroke:#d8d8d8;stroke-width:2;opacity:.55">نفذلي</text>
<circle cx="875" cy="968" r="5.500" fill="#cfd3e3"/><circle cx="889" cy="968" r="5.500" fill="#cfd3e3"/>
<text x="863" y="1001" textLength="195" lengthAdjust="spacingAndGlyphs" style="font-size:33px;fill:#cfd3e3;stroke:#cfd3e3;stroke-width:.4">nafezly.com</text>
</svg>
</body>
</html>
